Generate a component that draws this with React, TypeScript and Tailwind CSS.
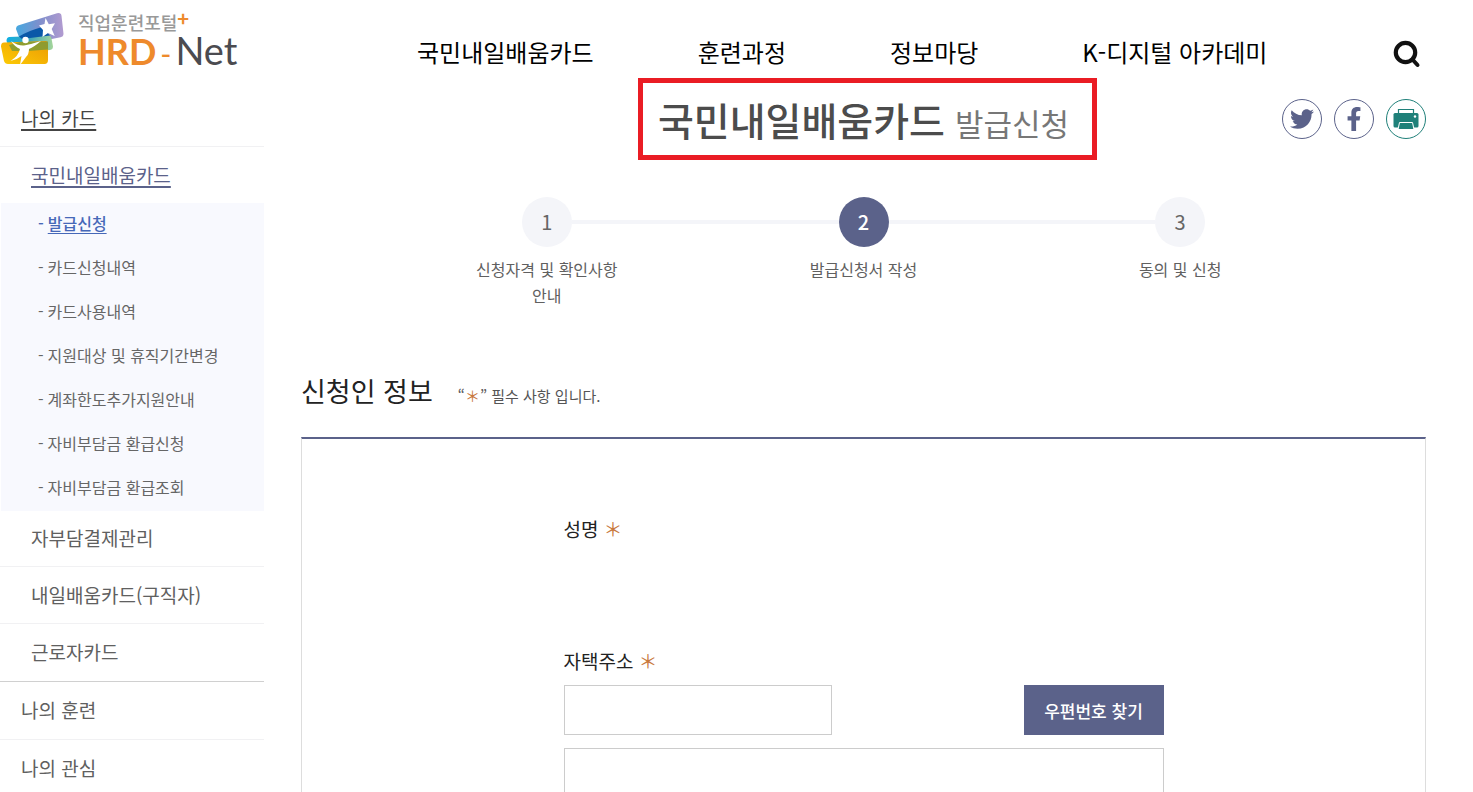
import React from "react";
import { FaFacebookF, FaTwitter } from "react-icons/fa";

const NAV = ["국민내일배움카드", "훈련과정", "정보마당", "K-디지털 아카데미"];

const SUB_MENU = [
  "발급신청",
  "카드신청내역",
  "카드사용내역",
  "지원대상 및 휴직기간변경",
  "계좌한도추가지원안내",
  "자비부담금 환급신청",
  "자비부담금 환급조회",
];

const STEPS = ["신청자격 및 확인사항 안내", "발급신청서 작성", "동의 및 신청"];
const CURRENT_STEP = 1;

function LogoMark() {
  return (
    <svg viewBox="0 0 64 54" className="h-[54px] w-16 shrink-0" aria-hidden="true">
      <defs>
        <linearGradient id="violet" x1="0" y1="0" x2="1" y2="0">
          <stop offset="0" stopColor="#45a8e0" />
          <stop offset="0.5" stopColor="#7f8fcc" />
          <stop offset="1" stopColor="#b29bd0" />
        </linearGradient>
        <linearGradient id="green" x1="0" y1="0" x2="1" y2="0">
          <stop offset="0" stopColor="#0fb0e4" />
          <stop offset="0.5" stopColor="#3fa5b8" />
          <stop offset="1" stopColor="#a5d59a" />
        </linearGradient>
        <linearGradient id="amber" x1="0" y1="1" x2="1" y2="0">
          <stop offset="0" stopColor="#fccb05" />
          <stop offset="1" stopColor="#ec9a04" />
        </linearGradient>
      </defs>
      <path d="M18 13.500 57 1.200q4-1 4.500 2.500l2 18q0 3-3 3.500L22 33l-6-16q0-3 2-3.500z" fill="url(#violet)" />
      <path d="M9 25 48 23.500q3 0 3.500 3l1.500 8q0 3-3 3.500L12 42 6.500 29q0-3.500 2.500-4z" fill="url(#green)" />
      <path d="M19 24.500q10-6 23-9.500l8 8.500-28 3.500z" fill="#0a58a8" />
      <path d="M4 30.500 46 29q2 0 2 2.500V48q0 4-3.500 4H8q-3 0-4-3L1 34.500q0-4 3-4z" fill="url(#amber)" />
      <path d="M9 33 20 30l28-.500v8L28 39 12 39z" fill="#6f9a3e" opacity="0.75" />
      <path d="m45.500 6 3.300 6.200 6.200-1-3.300 5.700 3 7.100-6.700-3-5.500 4 .500-7-4-4.500 5.500-1.500z" fill="#fff" />
      <circle cx="25.500" cy="28" r="3.200" fill="#fff" />
      <path d="M11 29q7 5 13 4.500 8-1.500 17-4.500-7 6-12 8 0 5-3 8l-6 8q1-6 1.500-9-5 4-11 5 8-5 9.500-12-5-2-9-8z" fill="#fff" />
    </svg>
  );
}

function SearchIcon() {
  return (
    <svg viewBox="0 0 28 28" className="size-7" fill="none" stroke="#111" aria-hidden="true">
      <circle cx="12.5" cy="12.5" r="9.7" strokeWidth="4.2" />
      <path d="m19.5 19.5 5 5.500" strokeWidth="4" strokeLinecap="round" />
    </svg>
  );
}

function PrinterIcon() {
  return (
    <svg viewBox="0 0 26 22" className="h-[22px] w-[26px]" aria-hidden="true">
      <path d="M5.500 6V1.500h15V6" fill="none" stroke="currentColor" strokeWidth="1.200" />
      <path d="M2 5h22q1.500 0 1.500 1.500V18q0 1.500-1.500 1.500H2Q.500 19.500.500 18V6.500Q.500 5 2 5z" fill="currentColor" />
      <circle cx="22" cy="8.500" r="1.200" fill="#fff" />
      <path d="M6.500 14.500h13l1.500 7H5z" fill="currentColor" stroke="#fff" strokeWidth="1" />
    </svg>
  );
}

function Required() {
  return <span className="text-[#c8783c]">＊</span>;
}

function Header() {
  return (
    <header className="flex h-[78px] items-start pr-[52px]">
      <a href="#home" className="flex w-[240px] shrink-0 gap-[14px] pt-3" aria-label="직업훈련포털 HRD-Net">
        <LogoMark />
        <span className="flex flex-col whitespace-nowrap">
          <span className="flex text-lg leading-5 font-medium text-[#999]">
            직업훈련포털
            <b className="text-xl leading-3 text-[#ee8a2c]">+</b>
          </span>
          <span className="flex items-baseline font-[Lato] leading-9">
            <b className="text-4xl leading-9 text-[#ee8a2c]">HRD</b>
            <span className="px-1 text-3xl leading-9 text-[#ee8a2c]">-</span>
            <span className="text-[38px] leading-9 text-[#4b4b50]">Net</span>
          </span>
        </span>
      </a>
      <nav className="ml-[177px] flex gap-[104px] pt-[34px] text-2xl leading-9 whitespace-nowrap text-black">
        {NAV.map((item) => (
          <a key={item} href="#menu">
            {item}
          </a>
        ))}
      </nav>
      <button type="button" aria-label="검색" className="mt-10 ml-auto">
        <SearchIcon />
      </button>
    </header>
  );
}

function Sidebar() {
  return (
    <aside className="w-[264px] shrink-0 pt-3 text-[19px] text-[#606060]">
      <a href="#card" className="flex h-[57px] items-center border-b border-[#f1f1f3] pl-[21px] text-[#444] underline decoration-2 underline-offset-3">
        나의 카드
      </a>
      <a href="#tomorrow" className="flex h-14 items-center pl-[31px] text-[#5b628a] underline decoration-2 underline-offset-3">
        국민내일배움카드
      </a>
      <ul className="ml-px bg-[#f8f9fe] text-base text-[#666]">
        {SUB_MENU.map((item, i) => (
          <li key={item} className={i === 0 ? "flex h-11 items-start gap-1 pt-2 pl-[37px] font-medium text-[#4668b8]" : "flex h-11 items-start gap-1 pt-2 pl-[37px]"}>
            <span>-</span>
            <a href="#sub" className={i === 0 ? "underline underline-offset-3" : ""}>
              {item}
            </a>
          </li>
        ))}
      </ul>
      <a href="#self" className="flex h-14 items-center border-b border-[#f1f1f3] pl-[31px]">자부담결제관리</a>
      <a href="#seeker" className="flex h-[57px] items-center border-b border-[#f1f1f3] pl-[31px]">내일배움카드(구직자)</a>
      <a href="#worker" className="flex h-[58px] items-center border-b border-[#d0d0d0] pl-[31px]">근로자카드</a>
      <a href="#training" className="flex h-[58px] items-center border-b border-[#f1f1f3] pl-[21px]">나의 훈련</a>
      <a href="#interest" className="flex h-[57px] items-center pl-[21px]">나의 관심</a>
    </aside>
  );
}

function Steps() {
  return (
    <ol className="mx-auto mt-[37px] grid w-full max-w-[950px] grid-cols-3 text-center">
      {STEPS.map((label, i) => (
        <li key={label} className="flex flex-col items-center">
          <div className="flex w-full items-center">
            <span className={i === 0 ? "h-1 flex-1" : "h-1 flex-1 bg-[#f4f5f9]"} />
            <span
              className={
                i === CURRENT_STEP
                  ? "flex size-[50px] items-center justify-center rounded-full bg-[#5b628a] text-xl font-medium text-white"
                  : "flex size-[50px] items-center justify-center rounded-full bg-[#f4f5f9] text-xl text-[#666]"
              }
            >
              {i + 1}
            </span>
            <span className={i === STEPS.length - 1 ? "h-1 flex-1" : "h-1 flex-1 bg-[#f4f5f9]"} />
          </div>
          <p className="mt-[9px] max-w-[150px] text-base leading-[26px] break-keep text-[#606060]">{label}</p>
        </li>
      ))}
    </ol>
  );
}

export default function App() {
  return (
    <div className="h-screen overflow-hidden bg-white font-['Noto_Sans_CJK_KR',sans-serif]" lang="ko">
      <Header />
      <div className="flex gap-[37px] pr-[47px]">
        <Sidebar />
        <main className="min-w-0 flex-1">
          <div className="grid grid-cols-[1fr_auto_1fr] items-center">
            <h1 className="col-start-2 ml-2 flex h-[82px] items-baseline gap-[10px] border-5 border-[#ea1c24] pr-[23px] pl-[15px] text-[39px] leading-[72px] font-medium whitespace-nowrap text-[#4c4c4c]">
              국민내일배움카드
              <span className="text-[31px] font-normal text-[#777]">발급신청</span>
            </h1>
            <div className="flex justify-end gap-3">
              <a href="#twitter" aria-label="트위터" className="flex size-10 items-center justify-center rounded-full border border-[#5b628a] text-[#5b628a]">
                <FaTwitter size={24} />
              </a>
              <a href="#facebook" aria-label="페이스북" className="flex size-10 items-center justify-center rounded-full border border-[#5b628a] text-[#5b628a]">
                <FaFacebookF size={24} />
              </a>
              <a href="#print" aria-label="인쇄" className="flex size-10 items-center justify-center rounded-full border border-[#1f8079] text-[#1f8079]">
                <PrinterIcon />
              </a>
            </div>
          </div>
          <Steps />
          <div className="mt-[63px] flex items-baseline gap-[25px]">
            <h2 className="text-[27px] leading-[40px] text-[#222]">신청인 정보</h2>
            <p className="text-[15px] text-[#555]">
              “<Required />” 필수 사항 입니다.
            </p>
          </div>
          <form className="mt-[26px] border border-t-2 border-[#ddd] border-t-[#5b628a] px-6 pt-[76px] text-[19px] text-[#222]">
            <div className="mx-auto max-w-[600px]">
              <div className="flex h-7 items-center gap-[5px]">
                성명
                <Required />
              </div>
              <label htmlFor="zip" className="mt-[104px] flex h-7 items-center gap-[5px]">
                자택주소
                <Required />
              </label>
              <div className="mt-[10px] flex justify-between">
                <input id="zip" className="h-[50px] w-[268px] border border-[#ccc] px-3" />
                <button type="button" className="h-[50px] w-[140px] bg-[#5b628a] pt-px text-[17px] font-medium text-white">
                  우편번호 찾기
                </button>
              </div>
              <input aria-label="상세주소" className="mt-[13px] h-[50px] w-full border border-[#ccc] px-3" />
            </div>
          </form>
        </main>
      </div>
    </div>
  );
}
